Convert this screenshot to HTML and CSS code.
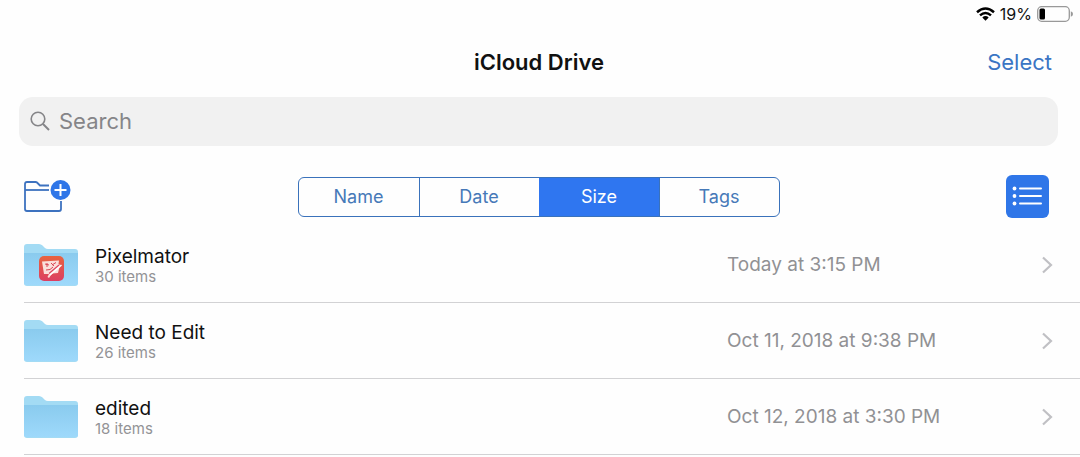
FILE: index.html
```html
<!DOCTYPE html>
<html lang="en">
<head>
<meta charset="utf-8">
<title>iCloud Drive</title>
<link rel="stylesheet" href="styles.css">
</head>
<body>
<svg class="defs" aria-hidden="true">
  <defs>
    <linearGradient id="folder-front" x1="0" y1="0" x2="0" y2="1">
      <stop offset="0" stop-color="#8acbee"/>
      <stop offset="1" stop-color="#9ed9fb"/>
    </linearGradient>
    <linearGradient id="app-tile" x1="0" y1="0" x2="0" y2="1">
      <stop offset="0" stop-color="#e8633f"/>
      <stop offset="1" stop-color="#dc3f62"/>
    </linearGradient>
    <symbol id="folder" viewBox="0 0 54 42">
      <path fill="#a3dbf4" d="M0 3Q0 0 3 0H15Q17 0 18.500 1.500L21 4Q22 5 24 5H51Q54 5 54 8V39Q54 42 51 42H3Q0 42 0 39Z"/>
      <path fill="url(#folder-front)" d="M0 9H54V39Q54 41 51 41H3Q0 41 0 39Z"/>
    </symbol>
    <symbol id="chevron" viewBox="0 0 12 18">
      <path d="M2 1.500L10 9L2 16.500" fill="none" stroke="#c0c0c4" stroke-width="2.200"/>
    </symbol>
  </defs>
</svg>

<div class="status">
  <svg class="wifi" viewBox="0 0 19 14" aria-label="Wi-Fi">
    <g fill="none" stroke="#000" stroke-width="2.500">
      <path d="M1 5.200Q9.500 -2.200 18 5.200"/>
      <path d="M4 8.400Q9.500 3.600 15 8.400"/>
    </g>
    <path d="M6.300 10.400Q9.500 7.700 12.700 10.400L9.500 13.800Z"/>
  </svg>
  <span>19%</span>
  <svg class="battery" viewBox="0 0 36 16" aria-label="Battery">
    <rect x=".7" y=".7" width="31.600" height="14.600" rx="4" fill="none" stroke="#999" stroke-width="1.300"/>
    <rect x="2.500" y="2.500" width="5.500" height="11" rx="1.500"/>
    <path d="M33.800 5.200Q36 6 36 8T33.800 10.800Z" fill="#999"/>
  </svg>
</div>

<header class="nav">
  <h1 class="title">iCloud Drive</h1>
  <button class="select" type="button">Select</button>
</header>

<label class="search">
  <svg class="search-icon" viewBox="0 0 20 20" aria-hidden="true">
    <circle cx="8" cy="8" r="6.800" fill="none" stroke="#858588" stroke-width="1.600"/>
    <path d="M13 13L19 19" stroke="#858588" stroke-width="2"/>
  </svg>
  <input class="search-input" type="search" placeholder="Search" aria-label="Search">
</label>

<div class="toolbar">
  <button class="icon-button" type="button" aria-label="New folder">
    <svg class="new-folder" viewBox="0 0 47 33" aria-hidden="true">
      <g fill="none" stroke="#3d72bf" stroke-width="1.800" stroke-linejoin="round">
        <path d="M25 5.500H16L13 2.500Q12.500 2 11.500 2H3Q1 2 1 4V29Q1 31 3 31H35Q37 31 37 29V21"/>
        <path d="M1 10H25"/>
      </g>
      <circle cx="36.500" cy="10" r="10" fill="#2f76e8"/>
      <path d="M30.500 10H42.500M36.500 4V16" stroke="#fff" stroke-width="2"/>
    </svg>
  </button>
  <div class="segments" role="group" aria-label="Sort by">
    <button class="segment" type="button">Name</button>
    <button class="segment" type="button">Date</button>
    <button class="segment active" type="button" aria-pressed="true">Size</button>
    <button class="segment" type="button">Tags</button>
  </div>
  <button class="icon-button list-button" type="button" aria-label="List view">
    <svg class="list-icon" viewBox="0 0 43 43" aria-hidden="true">
      <g fill="#fff">
        <circle cx="8.500" cy="13.500" r="1.900"/>
        <circle cx="8.500" cy="21" r="1.900"/>
        <circle cx="8.500" cy="28.500" r="1.900"/>
      </g>
      <path d="M14 13.500H35M14 21H35M14 28.500H35" stroke="#fff" stroke-width="2" stroke-linecap="round"/>
    </svg>
  </button>
</div>

<ul class="files">
  <li class="file">
    <svg class="folder" viewBox="0 0 54 42" aria-hidden="true">
      <use href="#folder"/>
      <rect x="15" y="12" width="25" height="25" rx="5" fill="url(#app-tile)"/>
      <path fill="#fadfdb" d="M18 17.500L35 16.500L34.500 20L36 21L34 29L28 29.500L25 34L23.500 33L25 30L20 30Z"/>
      <path fill="none" stroke="#d94555" stroke-width="1" d="M21 20L25 21M23 19V23M27 19L30 22M32 18.500L28 21M22 26L26 25.500L29 23"/>
      <path fill="none" stroke="#dc4560" stroke-width="1.200" d="M35 21L25 29.500"/>
      <path fill="none" stroke="#fff" stroke-width="1.600" d="M37.500 21L26 31"/>
    </svg>
    <div class="info"><span class="name">Pixelmator</span><span class="count">30 items</span></div>
    <time class="date">Today at 3:15 PM</time>
    <svg class="chevron" aria-hidden="true"><use href="#chevron"/></svg>
  </li>
  <li class="file">
    <svg class="folder" viewBox="0 0 54 42" aria-hidden="true"><use href="#folder"/></svg>
    <div class="info"><span class="name">Need to Edit</span><span class="count">26 items</span></div>
    <time class="date">Oct 11, 2018 at 9:38 PM</time>
    <svg class="chevron" aria-hidden="true"><use href="#chevron"/></svg>
  </li>
  <li class="file">
    <svg class="folder" viewBox="0 0 54 42" aria-hidden="true"><use href="#folder"/></svg>
    <div class="info"><span class="name">edited</span><span class="count">18 items</span></div>
    <time class="date">Oct 12, 2018 at 3:30 PM</time>
    <svg class="chevron" aria-hidden="true"><use href="#chevron"/></svg>
  </li>
</ul>
</body>
</html>
```
FILE: styles.css
```css
* {
  box-sizing: border-box;
}

body {
  margin: 0;
  background: #fefefe;
  color: #111;
  font-family: Inter, "Liberation Sans", sans-serif;
}

button {
  padding: 0;
  border: 0;
  background: none;
  font: inherit;
}

svg {
  display: block;
  flex: none;
}

.defs {
  width: 0;
  height: 0;
}

.status {
  display: flex;
  align-items: center;
  justify-content: flex-end;
  gap: 5px;
  height: 28px;
  padding-right: 7px;
  font-size: 16px;
}

.wifi {
  width: 19px;
  height: 14px;
}

.battery {
  width: 36px;
  height: 16px;
}

.nav {
  display: grid;
  grid-template-columns: 1fr auto 1fr;
  align-items: center;
  height: 69px;
  padding: 0 28px 2px 26px;
  font-size: 22px;
  line-height: 28px;
}

.title {
  grid-column: 2;
  margin: 0;
  font-size: 22px;
  font-weight: 600;
}

.select {
  justify-self: end;
  color: #3a75c4;
}

.search {
  display: flex;
  align-items: center;
  gap: 9px;
  height: 49px;
  margin: 0 22px 0 19px;
  padding: 0 11px 2px;
  border-radius: 14px;
  background: #f1f1f1;
}

.search-icon {
  width: 20px;
  height: 20px;
}

.search-input {
  flex: 1;
  min-width: 0;
  padding: 0;
  border: 0;
  outline: 0;
  background: none;
  font: inherit;
  font-size: 22px;
}

.search-input::placeholder {
  color: #858588;
  opacity: 1;
}

.toolbar {
  display: grid;
  grid-template-columns: 1fr minmax(0, 482px) 1fr;
  align-items: center;
  padding: 29px 27px 9px 24px;
}

.icon-button {
  justify-self: start;
}

.new-folder {
  width: 47px;
  height: 33px;
}

.segments {
  display: grid;
  grid-template-columns: repeat(4, 1fr);
  height: 40px;
  overflow: hidden;
  border: 1px solid #3a72bb;
  border-radius: 6px;
}

.segment {
  color: #4679b8;
  font-size: 18px;
}

.segment + .segment {
  border-left: 1px solid #3a72bb;
}

.segments .active {
  border-color: #2f76f0;
  background: #2f76f0;
  color: #fff;
}

.list-button {
  justify-self: end;
  margin-right: 4px;
  border-radius: 6px;
  background: #2f76e8;
}

.list-icon {
  width: 43px;
  height: 43px;
}

.files {
  margin: 0;
  padding: 0 0 0 24px;
  list-style: none;
}

.file {
  display: flex;
  align-items: center;
  height: 76px;
  padding-right: 27px;
  border-bottom: 1px solid #d2d2d4;
}

.folder {
  width: 54px;
  height: 42px;
}

.info {
  display: flex;
  flex: 1;
  flex-direction: column;
  min-width: 0;
  padding: 2px 0 0 17px;
}

.name {
  font-size: 19px;
  line-height: 22px;
}

.count {
  color: #939396;
  font-size: 15px;
  line-height: 18px;
}

.date {
  width: 314px;
  color: #919194;
  font-size: 19px;
}

.chevron {
  width: 12px;
  height: 18px;
}
```
